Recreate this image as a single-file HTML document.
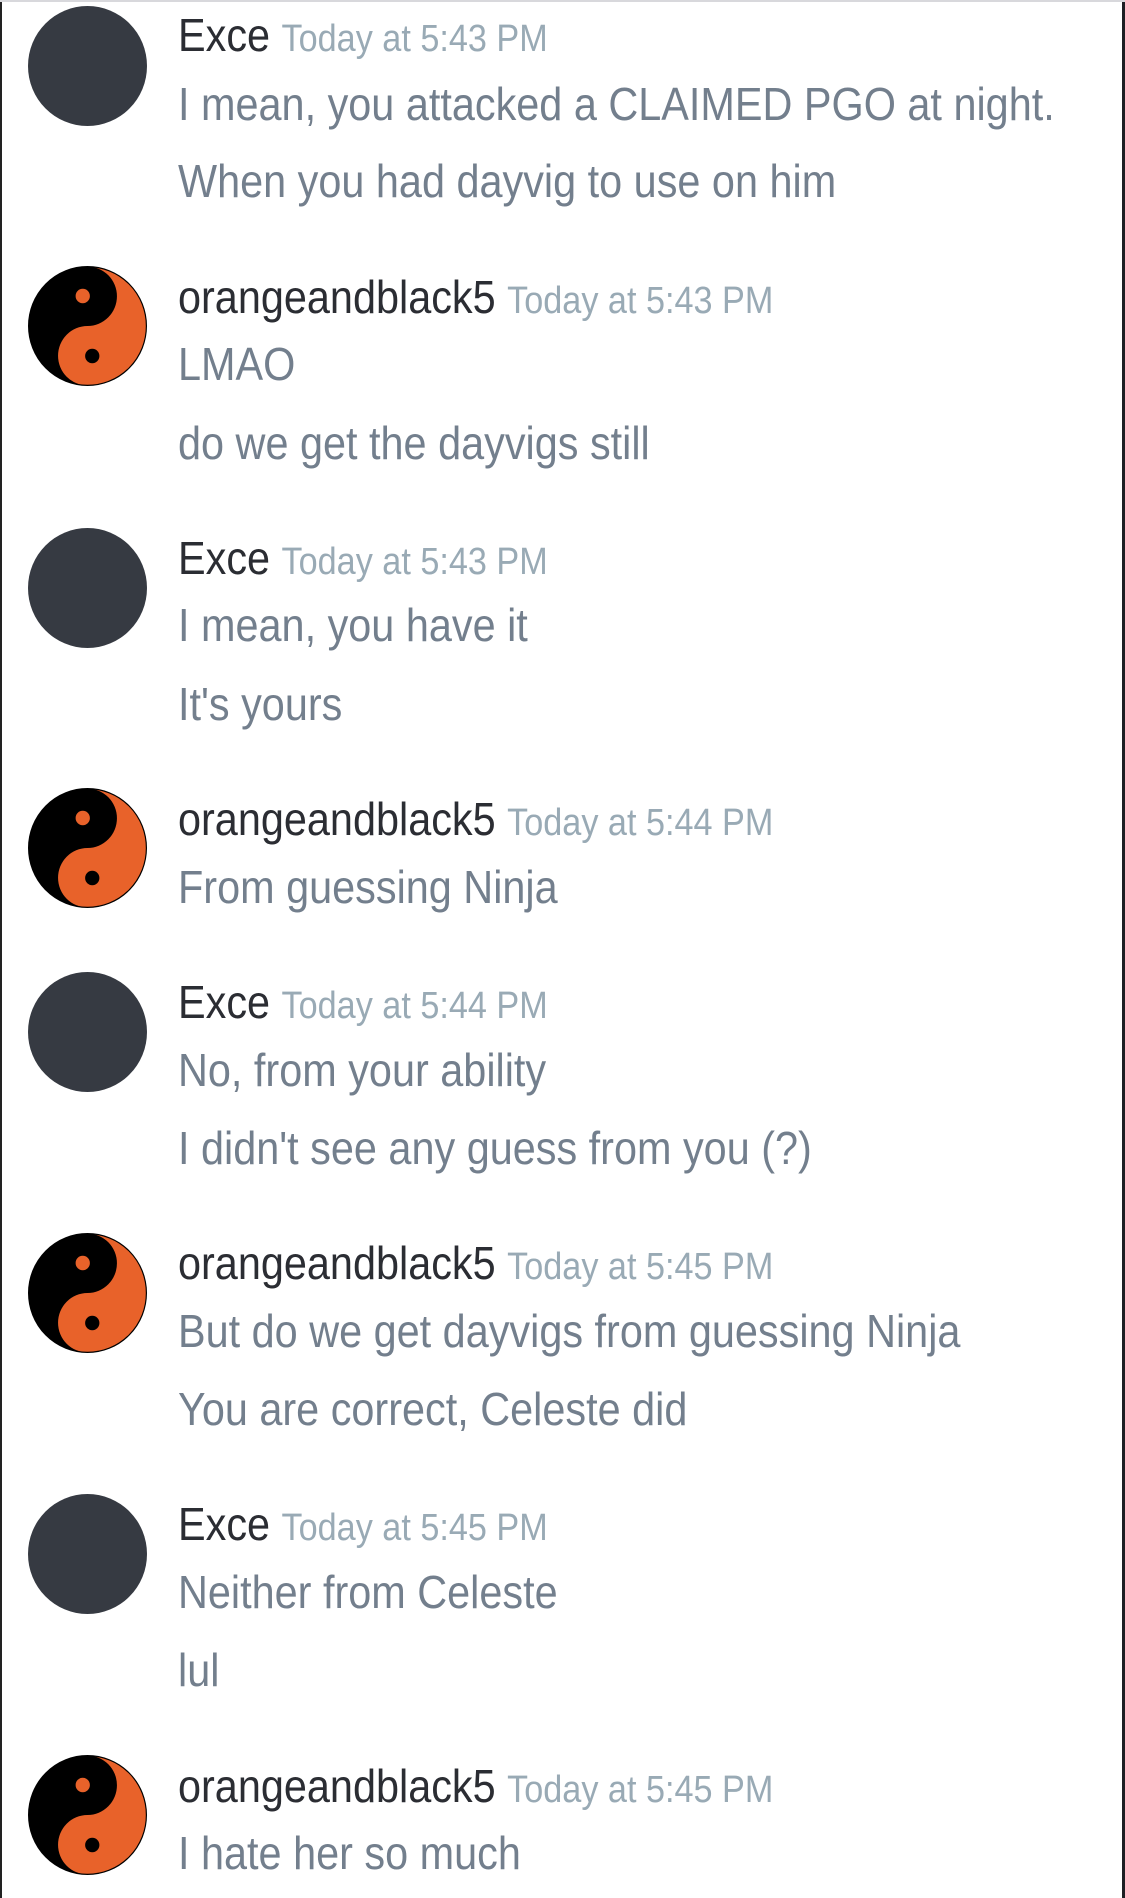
<!DOCTYPE html>
<html><head><meta charset="utf-8"><style>
html,body{margin:0;padding:0;}
body{width:1125px;height:1898px;background:#fff;position:relative;overflow:hidden;font-family:"Liberation Sans",sans-serif;}
.bl{position:absolute;left:0;top:0;width:2px;height:1898px;background:#222;}
.br{position:absolute;right:0;top:0;width:3px;height:1898px;background:#1e1f24;}
.bt{position:absolute;left:0;top:0;width:1125px;height:2px;background:#d8d8dc;}
.av{position:absolute;left:28px;width:119px;height:120px;}
.gr{border-radius:50%;background:#363a42;}
.t{position:absolute;left:178px;white-space:nowrap;font-size:46px;line-height:56px;transform:scaleX(0.9);transform-origin:left center;}
.n{color:#2b2d33;}
.ts{color:#99aab5;font-size:38px;}
.b{color:#737f8d;}
</style></head><body>
<div class="bl"></div><div class="br"></div><div class="bt"></div>

<div class="av gr" style="top:6px"></div>
<div class="t" style="top:7px"><span class="n">Exce</span> <span class="ts">Today at 5:43 PM</span></div>
<div class="t b" style="top:76px">I mean, you attacked a CLAIMED PGO at night.</div>
<div class="t b" style="top:153px">When you had dayvig to use on him</div>

<svg class="av" style="top:266px" viewBox="0 0 100 100" preserveAspectRatio="none"><circle cx="50" cy="50" r="49.5" fill="#000"/><path d="M50,0.5 A49.5,49.5 0 0 1 50,99.5 A24.75,24.75 0 0 1 50,50 A24.75,24.75 0 0 0 50,0.5Z" fill="#e8622a"/><circle cx="46" cy="25" r="6" fill="#e8622a"/><circle cx="54" cy="75" r="6" fill="#000"/><circle cx="50" cy="50" r="49.5" fill="none" stroke="#000" stroke-width="1"/></svg>
<div class="t" style="top:269px"><span class="n">orangeandblack5</span> <span class="ts">Today at 5:43 PM</span></div>
<div class="t b" style="top:336px">LMAO</div>
<div class="t b" style="top:415px">do we get the dayvigs still</div>

<div class="av gr" style="top:528px"></div>
<div class="t" style="top:530px"><span class="n">Exce</span> <span class="ts">Today at 5:43 PM</span></div>
<div class="t b" style="top:597px">I mean, you have it</div>
<div class="t b" style="top:676px">It's yours</div>

<svg class="av" style="top:788px" viewBox="0 0 100 100" preserveAspectRatio="none"><circle cx="50" cy="50" r="49.5" fill="#000"/><path d="M50,0.5 A49.5,49.5 0 0 1 50,99.5 A24.75,24.75 0 0 1 50,50 A24.75,24.75 0 0 0 50,0.5Z" fill="#e8622a"/><circle cx="46" cy="25" r="6" fill="#e8622a"/><circle cx="54" cy="75" r="6" fill="#000"/><circle cx="50" cy="50" r="49.5" fill="none" stroke="#000" stroke-width="1"/></svg>
<div class="t" style="top:791px"><span class="n">orangeandblack5</span> <span class="ts">Today at 5:44 PM</span></div>
<div class="t b" style="top:859px">From guessing Ninja</div>

<div class="av gr" style="top:972px"></div>
<div class="t" style="top:974px"><span class="n">Exce</span> <span class="ts">Today at 5:44 PM</span></div>
<div class="t b" style="top:1042px">No, from your ability</div>
<div class="t b" style="top:1120px">I didn't see any guess from you (?)</div>

<svg class="av" style="top:1233px" viewBox="0 0 100 100" preserveAspectRatio="none"><circle cx="50" cy="50" r="49.5" fill="#000"/><path d="M50,0.5 A49.5,49.5 0 0 1 50,99.5 A24.75,24.75 0 0 1 50,50 A24.75,24.75 0 0 0 50,0.5Z" fill="#e8622a"/><circle cx="46" cy="25" r="6" fill="#e8622a"/><circle cx="54" cy="75" r="6" fill="#000"/><circle cx="50" cy="50" r="49.5" fill="none" stroke="#000" stroke-width="1"/></svg>
<div class="t" style="top:1235px"><span class="n">orangeandblack5</span> <span class="ts">Today at 5:45 PM</span></div>
<div class="t b" style="top:1303px">But do we get dayvigs from guessing Ninja</div>
<div class="t b" style="top:1381px">You are correct, Celeste did</div>

<div class="av gr" style="top:1494px"></div>
<div class="t" style="top:1496px"><span class="n">Exce</span> <span class="ts">Today at 5:45 PM</span></div>
<div class="t b" style="top:1564px">Neither from Celeste</div>
<div class="t b" style="top:1642px">lul</div>

<svg class="av" style="top:1755px" viewBox="0 0 100 100" preserveAspectRatio="none"><circle cx="50" cy="50" r="49.5" fill="#000"/><path d="M50,0.5 A49.5,49.5 0 0 1 50,99.5 A24.75,24.75 0 0 1 50,50 A24.75,24.75 0 0 0 50,0.5Z" fill="#e8622a"/><circle cx="46" cy="25" r="6" fill="#e8622a"/><circle cx="54" cy="75" r="6" fill="#000"/><circle cx="50" cy="50" r="49.5" fill="none" stroke="#000" stroke-width="1"/></svg>
<div class="t" style="top:1758px"><span class="n">orangeandblack5</span> <span class="ts">Today at 5:45 PM</span></div>
<div class="t b" style="top:1825px">I hate her so much</div>
</body></html>
